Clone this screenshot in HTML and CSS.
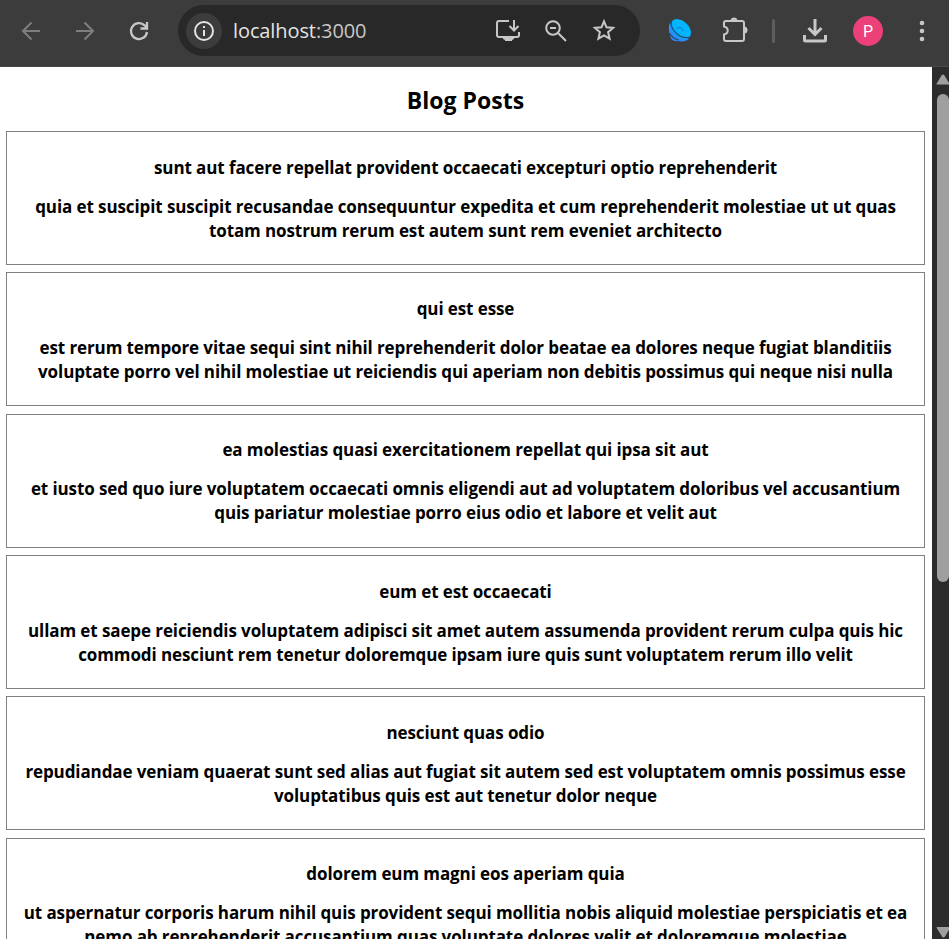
FILE: index.html
```html
<!DOCTYPE html>
<html lang="en">
<head>
<meta charset="utf-8">
<title>Blog Posts</title>
<link rel="stylesheet" href="styles.css">
</head>
<body>
<header class="toolbar">
  <svg class="icon back" width="20" height="20" viewBox="0 0 20 20"><path d="M19 10H2M10.500 1.500L2 10l8.500 8.500"/></svg>
  <svg class="icon forward" width="20" height="20" viewBox="0 0 20 20"><path d="M1 10h17M9.500 1.500L18 10l-8.500 8.500"/></svg>
  <svg class="icon reload" width="20" height="20" viewBox="0 0 20 20"><path d="M18 11a8 8 0 1 1-2.400-6.700L18 7M18 1v6.500h-6.500"/></svg>
  <div class="address">
    <span class="site-info"><svg class="icon" width="20" height="20" viewBox="0 0 20 20"><circle cx="10" cy="10" r="9"/><path d="M10 9v6M10 5v2"/></svg></span>
    <span class="url">localhost<span class="port">:3000</span></span>
    <svg class="icon install" width="26" height="24" viewBox="0 0 26 24"><path d="M14 2H4a2 2 0 0 0-2 2v12a2 2 0 0 0 2 2h18a2 2 0 0 0 2-2v-3M19 1v10M14.500 7l4.500 4.500L23.500 7"/><path class="solid" d="M8 18h11v2l-2 1v1H10v-1l-2-1z"/></svg>
    <svg class="icon zoom-out" width="22" height="22" viewBox="0 0 22 22"><circle cx="8" cy="8" r="6.800"/><path d="M5 8h6M13 13l8 8"/></svg>
    <svg class="icon star" width="24" height="24" viewBox="0 0 24 24"><path d="M12 3.300l2.500 6 6.600.6-5 4.300 1.500 6.500-5.600-3.400-5.600 3.400 1.500-6.500-5-4.300 6.600-.6z"/></svg>
  </div>
  <svg class="dish" width="24" height="24" viewBox="0 0 24 24">
    <defs><linearGradient id="blue" x1="0" y1="1" x2="1" y2="0"><stop offset="0" stop-color="#3484f8"/><stop offset="1" stop-color="#1c9cff"/></linearGradient></defs>
    <path fill="url(#blue)" d="M2 4C0 8 1 13 2 16c0 4 4 7 8 6 5 1 10 0 11-3z"/>
    <ellipse cx="12.800" cy="10" rx="11.800" ry="8" transform="rotate(43 12.800 10)" fill="#00b4ff"/>
    <path fill="none" stroke="#244b70" stroke-width="1.300" d="M3.500 3C2 10 11 20 21 18.500M1.500 14c2 4 5 6 9 7"/>
    <path fill="none" stroke="#1776a8" stroke-width="1" d="M9 10c1-3 6-1 6 2"/>
  </svg>
  <svg class="icon puzzle" width="26" height="26" viewBox="0 0 26 26"><path d="M4 4h16a2 2 0 0 1 2 2v16a2 2 0 0 1-2 2H4a2 2 0 0 1-2-2v-4.500c5-1 5-7 0-8V6a2 2 0 0 1 2-2z"/><path class="solid" d="M8.500 4a3.500 3.500 0 0 1 7 0zM22 9.500a3.500 3.500 0 0 1 0 7z"/></svg>
  <span class="divider"></span>
  <svg class="icon download" width="24" height="24" viewBox="0 0 24 24"><path d="M12 0v15M5.500 9l6.500 6.500L18.500 9M1.500 16v5a1 1 0 0 0 1 1h19a1 1 0 0 0 1-1v-5"/></svg>
  <span class="avatar">P</span>
  <svg class="menu" width="6" height="22" viewBox="0 0 6 22"><circle cx="3" cy="3" r="2.300"/><circle cx="3" cy="11" r="2.300"/><circle cx="3" cy="19" r="2.300"/></svg>
</header>
<div class="viewport">
  <main class="page">
    <h1>Blog Posts</h1>
    <article class="post"><h2>sunt aut facere repellat provident occaecati excepturi optio reprehenderit</h2><p>quia et suscipit suscipit recusandae consequuntur expedita et cum reprehenderit molestiae ut ut quas<br>totam nostrum rerum est autem sunt rem eveniet architecto</p></article>
    <article class="post"><h2>qui est esse</h2><p>est rerum tempore vitae sequi sint nihil reprehenderit dolor beatae ea dolores neque fugiat blanditiis<br>voluptate porro vel nihil molestiae ut reiciendis qui aperiam non debitis possimus qui neque nisi nulla</p></article>
    <article class="post"><h2>ea molestias quasi exercitationem repellat qui ipsa sit aut</h2><p>et iusto sed quo iure voluptatem occaecati omnis eligendi aut ad voluptatem doloribus vel accusantium<br>quis pariatur molestiae porro eius odio et labore et velit aut</p></article>
    <article class="post"><h2>eum et est occaecati</h2><p>ullam et saepe reiciendis voluptatem adipisci sit amet autem assumenda provident rerum culpa quis hic<br>commodi nesciunt rem tenetur doloremque ipsam iure quis sunt voluptatem rerum illo velit</p></article>
    <article class="post"><h2>nesciunt quas odio</h2><p>repudiandae veniam quaerat sunt sed alias aut fugiat sit autem sed est voluptatem omnis possimus esse<br>voluptatibus quis est aut tenetur dolor neque</p></article>
    <article class="post"><h2>dolorem eum magni eos aperiam quia</h2><p>ut aspernatur corporis harum nihil quis provident sequi mollitia nobis aliquid molestiae perspiciatis et ea<br>nemo ab reprehenderit accusantium quas voluptate dolores velit et doloremque molestiae</p></article>
  </main>
  <aside class="scrollbar">
    <svg width="17" height="11" viewBox="0 0 17 11"><path d="M5 10.500Q4 10.500 5 9l4.500-7.500q1.500-2 3 0L17 9v1.500z"/></svg>
    <span class="thumb"></span>
    <svg class="down" width="17" height="12" viewBox="0 0 17 12"><path d="M5 0Q4 0 5 1.500l5 8q1.500 2 3 0L17 3V0z"/></svg>
  </aside>
</div>
</body>
</html>
```
FILE: styles.css
```css
* { box-sizing: border-box; }
body { margin: 0; width: 949px; height: 939px; overflow: hidden; display: flex; flex-direction: column; background: #fff; color: #000; font-family: "Open Sans", "Noto Sans", sans-serif; }
svg { display: block; flex: none; }
.toolbar { height: 67px; flex: none; display: flex; align-items: center; padding: 0 0 5px 21px; background: #3c3c3c; border-bottom: 1px solid #494747; }
.icon { fill: none; stroke: #c7c7c7; stroke-width: 2; }
.solid { fill: #c7c7c7; stroke: none; }
.back, .forward { stroke: #7e7e7e; }
.forward { margin-left: 34px; }
.reload { margin-left: 34px; stroke-width: 2.3; }
.address { width: 462px; height: 51px; margin-left: 29px; padding-left: 8px; border-radius: 26px; background: #282828; display: flex; align-items: center; }
.site-info { width: 36px; height: 36px; border-radius: 50%; background: #3c3c3c; display: grid; place-items: center; }
.site-info .icon { stroke: #e3e3e3; }
.url { width: 262px; margin-left: 11px; color: #e3e3e3; font-size: 20px; line-height: 28px; letter-spacing: -.1px; white-space: nowrap; }
.port { color: #c7c7c7; }
.zoom-out { margin-left: 24px; }
.star { margin-left: 25px; margin-top: -1px; }
.dish { margin-left: 28px; }
.puzzle { margin-left: 30px; margin-top: -2px; }
.divider { width: 3px; height: 24px; margin-left: 24px; border-radius: 2px; background: #5e5e5e; }
.download { margin-left: 28px; stroke-width: 3; }
.avatar { width: 30px; height: 30px; margin-left: 26px; border-radius: 50%; background: #ec407a; color: #fff; font: 16px/31px Roboto, sans-serif; text-align: center; }
.menu { margin-left: 36px; fill: #c7c7c7; }
.viewport { flex: 1; min-height: 0; display: flex; }
.page { width: 932px; flex: none; padding: 0 7px 0 6px; overflow: hidden; text-align: center; white-space: nowrap; }
h1 { margin: 17px 0 15px; font-size: 23px; line-height: 32px; font-weight: 700; letter-spacing: .05px; }
.post { height: 134px; margin-bottom: 7.35px; padding-top: 23.5px; border: 1px solid #808080; font-size: 17px; line-height: 24px; font-weight: 700; letter-spacing: -.1px; display: flow-root; }
h2 { margin: 0 0 15px; font-size: inherit; font-weight: inherit; }
p { margin: 0 -10px; }
.scrollbar { width: 17px; background: #2c2c2c; display: flex; flex-direction: column; align-items: stretch; padding: 7px 0 0; fill: #9f9f9f; }
.thumb { height: 488px; margin: 9px 0 0 5px; width: 12px; border-radius: 6px; background: #9f9f9f; }
.down { margin-top: auto; }
```
